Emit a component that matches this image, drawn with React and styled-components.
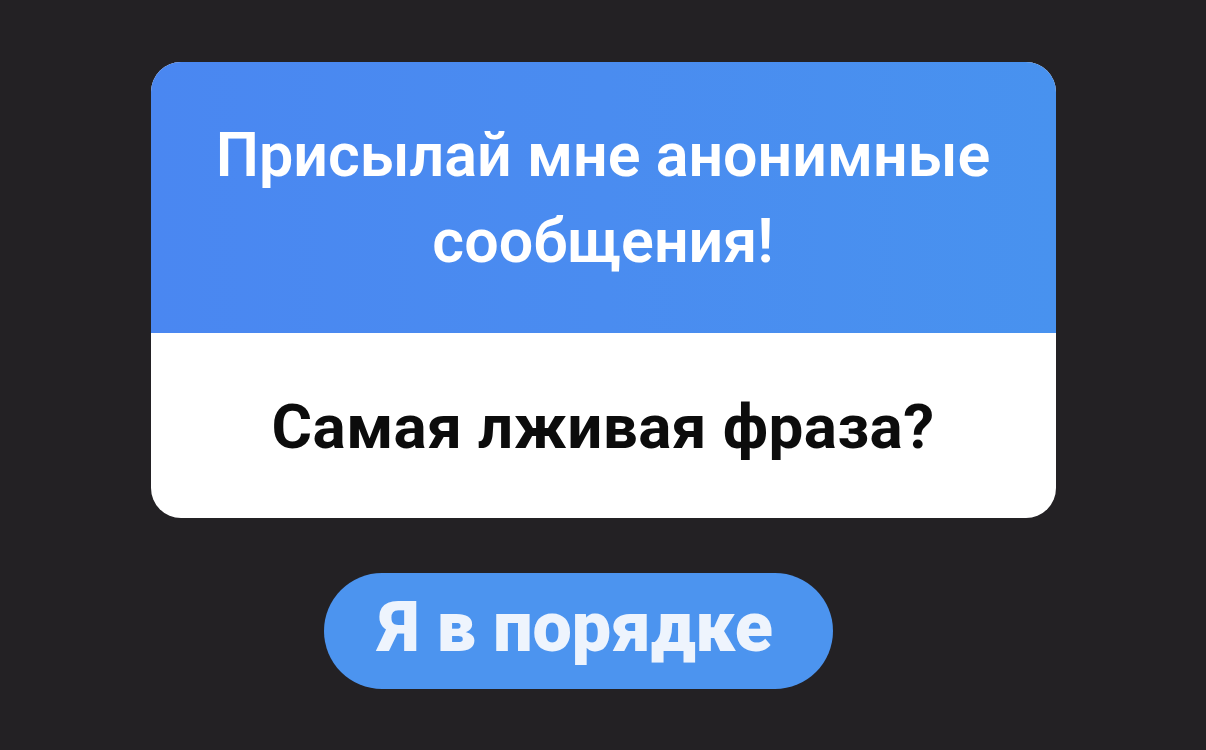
import React from 'react';
import styled, { createGlobalStyle } from 'styled-components';

const GlobalStyle = createGlobalStyle`
  html, body {
    margin: 0;
    padding: 0;
    background: #232124;
  }
  body {
    font-family: Roboto, "Noto Sans", "Liberation Sans", sans-serif;
  }
`;

const Page = styled.div`
  width: 1206px;
  height: 750px;
  display: flex;
  flex-direction: column;
  align-items: center;
  padding-top: 62px;
  box-sizing: border-box;
`;

const Card = styled.div`
  width: 905px;
  border-radius: 30px;
  overflow: hidden;
  display: flex;
  flex-direction: column;
  background: #ffffff;
`;

const CardHead = styled.div`
  height: 271px;
  display: flex;
  align-items: center;
  justify-content: center;
  background: linear-gradient(90deg, #4a87f1 0%, #4a8cf0 50%, #4892ef 100%);
`;

const Title = styled.h1`
  margin: 0;
  text-align: center;
  color: #ffffff;
  font-size: 61px;
  font-weight: 600;
  line-height: 86px;
`;

const CardBody = styled.div`
  height: 185px;
  display: flex;
  align-items: center;
  justify-content: center;
`;

const Question = styled.div`
  color: #0c0c0c;
  font-size: 62px;
  font-weight: 700;
  letter-spacing: 0.4px;
  padding-top: 2px;
`;

const Button = styled.button`
  margin-top: 55px;
  margin-right: 50px;
  width: 509px;
  height: 116px;
  border: none;
  border-radius: 58px;
  background: #4c94ef;
  color: #eef4fd;
  font-family: Roboto, "Noto Sans", "Liberation Sans", sans-serif;
  font-size: 70px;
  font-weight: 900;
  display: flex;
  align-items: center;
  justify-content: center;
  padding: 0 4px 8px 0;
`;

export default function App() {
  return (
    <>
      <GlobalStyle />
      <Page>
        <Card>
          <CardHead>
            <Title>
              Присылай мне анонимные
              <br />
              сообщения!
            </Title>
          </CardHead>
          <CardBody>
            <Question>Самая лживая фраза?</Question>
          </CardBody>
        </Card>
        <Button>Я в порядке</Button>
      </Page>
    </>
  );
}
